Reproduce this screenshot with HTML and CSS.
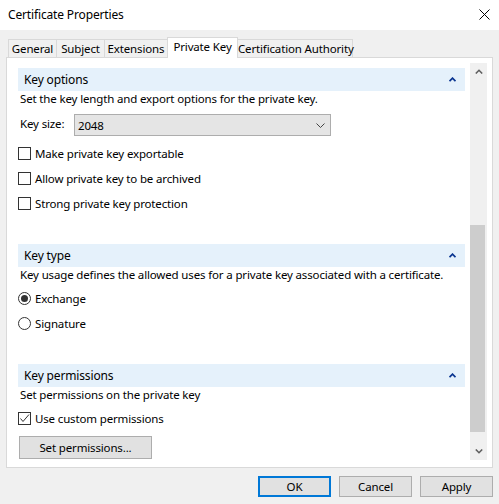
FILE: index.html
```html
<!DOCTYPE html>
<html>
<head>
<meta charset="utf-8">
<link rel="stylesheet" href="styles.css">
</head>
<body>
<div class="window">
  <div class="titlebar">
    <span class="title">Certificate Properties</span>
    <svg class="close" width="11" height="11" viewBox="0 0 11 11"><path d="M0.5 0.5 L10.5 10.5 M10.5 0.5 L0.5 10.5" stroke="#000" stroke-width="1" fill="none"/></svg>
  </div>
  <div class="tabs">
    <div class="tab t-general">General</div>
    <div class="tab t-subject">Subject</div>
    <div class="tab t-ext">Extensions</div>
    <div class="tab t-pk selected">Private Key</div>
    <div class="tab t-ca">Certification Authority</div>
  </div>
  <div class="panel">
    <div class="content">
      <div class="section-head"><span>Key options</span>
        <svg class="chev" width="7" height="5" viewBox="0 0 7 5"><path d="M0.5 4.2 L3.5 1.2 L6.5 4.2" stroke="#0a3591" stroke-width="1.8" fill="none"/></svg>
      </div>
      <div class="desc">Set the key length and export options for the private key.</div>
      <div class="keysize">
        <span class="ks-label">Key size:</span>
        <div class="select"><span>2048</span>
          <svg width="9" height="5" viewBox="0 0 9 5"><path d="M0.5 0.5 L4.5 4.5 L8.5 0.5" stroke="#444" stroke-width="1" fill="none"/></svg>
        </div>
      </div>
      <div class="check first"><span class="box"></span><span>Make private key exportable</span></div>
      <div class="check"><span class="box"></span><span>Allow private key to be archived</span></div>
      <div class="check"><span class="box"></span><span>Strong private key protection</span></div>

      <div class="section-head gap"><span>Key type</span>
        <svg class="chev" width="7" height="5" viewBox="0 0 7 5"><path d="M0.5 4.2 L3.5 1.2 L6.5 4.2" stroke="#0a3591" stroke-width="1.8" fill="none"/></svg>
      </div>
      <div class="desc">Key usage defines the allowed uses for a private key associated with a certificate.</div>
      <div class="check first-r"><span class="radio on"></span><span>Exchange</span></div>
      <div class="check"><span class="radio"></span><span>Signature</span></div>

      <div class="section-head gap"><span>Key permissions</span>
        <svg class="chev" width="7" height="5" viewBox="0 0 7 5"><path d="M0.5 4.2 L3.5 1.2 L6.5 4.2" stroke="#0a3591" stroke-width="1.8" fill="none"/></svg>
      </div>
      <div class="desc">Set permissions on the private key</div>
      <div class="check first-r"><span class="box checked"><svg width="11" height="11" viewBox="0 0 11 11"><path d="M1.5 5.5 L4 8.5 L10 1.5" stroke="#333" stroke-width="1" fill="none"/></svg></span><span>Use custom permissions</span></div>
      <div class="btn perm">Set permissions...</div>
    </div>
    <div class="scrollbar">
      <div class="sb-arrow"><svg width="8" height="5" viewBox="0 0 8 5"><path d="M0.8 4.5 L4 1.3 L7.2 4.5" stroke="#606060" stroke-width="1.6" fill="none"/></svg></div>
      <div class="sb-track"><div class="sb-thumb"></div></div>
      <div class="sb-arrow"><svg width="8" height="5" viewBox="0 0 8 5"><path d="M0.8 0.5 L4 3.7 L7.2 0.5" stroke="#606060" stroke-width="1.6" fill="none"/></svg></div>
    </div>
  </div>
  <div class="buttons">
    <div class="btn dlg default">OK</div>
    <div class="btn dlg">Cancel</div>
    <div class="btn dlg">Apply</div>
  </div>
</div>
</body>
</html>
```

FILE: styles.css
```css
html, body {
  margin: 0;
  padding: 0;
  background: #f0f0f0;
}
body {
  font-family: "Noto Sans", "Open Sans", sans-serif;
  font-size: 11.5px;
  letter-spacing: -0.15px;
  color: #000;
}
.window {
  width: 499px;
  height: 504px;
  background: #f0f0f0;
  overflow: hidden;
}
.titlebar {
  height: 30px;
  background: #fff;
  display: flex;
  align-items: center;
  justify-content: space-between;
  padding: 0 9px 0 8px;
}
.title {
  font-size: 12px;
  line-height: 16px;
}
.close {
  display: block;
  margin-top: -2px;
}
.tabs {
  display: flex;
  align-items: flex-end;
  height: 20px;
  margin-top: 7px;
  padding-left: 8px;
}
.tab {
  box-sizing: border-box;
  height: 18px;
  border: 1px solid #d9d9d9;
  border-bottom: none;
  background: #f0f0f0;
  text-align: center;
  line-height: 17px;
  margin-left: -1px;
  white-space: nowrap;
}
.t-general { width: 49px; margin-left: 0; }
.t-subject { width: 49px; }
.t-ext { width: 64px; }
.t-pk { width: 71px; }
.t-ca { width: 116px; }
.tab.selected {
  height: 21px;
  margin-bottom: -1px;
  background: #fff;
  position: relative;
  z-index: 1;
  line-height: 17px;
}
.panel {
  box-sizing: border-box;
  margin-left: 6px;
  width: 487px;
  height: 411px;
  background: #fff;
  border: 1px solid #d9d9d9;
  display: flex;
  padding: 5px 5px 7px 11px;
}
.content {
  width: 447px;
  height: 397px;
  overflow: hidden;
  padding-top: 5px;
  box-sizing: border-box;
  display: flex;
  flex-direction: column;
}
.section-head {
  flex: none;
  height: 23px;
  background: #e5f1fb;
  display: flex;
  align-items: center;
  justify-content: space-between;
  padding: 0 9px 0 6px;
  line-height: 16px;
  font-size: 12px;
}
.section-head.gap { margin-top: 33px; }
.chev { display: block; }
.desc {
  flex: none;
  line-height: 15px;
  padding-left: 2px;
  white-space: nowrap;
}
.keysize {
  flex: none;
  display: flex;
  align-items: center;
  margin-top: 8px;
  padding-left: 2px;
}
.ks-label {
  width: 54px;
  margin-top: -4px;
}
.select {
  box-sizing: border-box;
  width: 257px;
  height: 22px;
  background: #e5e5e5;
  border: 1px solid #adadad;
  display: flex;
  align-items: center;
  justify-content: space-between;
  padding: 0 5px 0 3px;
}
.select svg { display: block; margin-top: 1px; }
.check {
  flex: none;
  display: flex;
  align-items: center;
  height: 15px;
  line-height: 15px;
  margin-top: 10px;
}
.check.first { margin-top: 10px; }
.check.first-r { margin-top: 9px; }
.box {
  box-sizing: border-box;
  width: 13px;
  height: 13px;
  border: 1px solid #333;
  background: #fff;
  margin-right: 4px;
  flex: none;
}
.box svg { display: block; }
.radio {
  box-sizing: border-box;
  width: 13px;
  height: 13px;
  border: 1px solid #333;
  border-radius: 50%;
  background: #fff;
  margin-right: 4px;
  flex: none;
  display: flex;
  align-items: center;
  justify-content: center;
}
.radio.on::after {
  content: "";
  width: 7px;
  height: 7px;
  border-radius: 50%;
  background: #333;
}
.btn {
  box-sizing: border-box;
  background: #e1e1e1;
  border: 1px solid #adadad;
  display: flex;
  align-items: center;
  justify-content: center;
}
.perm {
  flex: none;
  width: 133px;
  height: 23px;
  margin-top: 10px;
  margin-left: 1px;
}
.scrollbar {
  width: 17px;
  height: 397px;
  margin-left: 5px;
  background: #f0f0f0;
  display: flex;
  flex-direction: column;
}
.sb-arrow {
  height: 17px;
  display: flex;
  align-items: center;
  justify-content: center;
  flex: none;
}
.sb-track {
  flex: 1;
  padding-top: 145px;
}
.sb-thumb {
  width: 15px;
  height: 207px;
  background: #cdcdcd;
}
.buttons {
  display: flex;
  justify-content: flex-end;
  gap: 8px;
  margin-top: 8px;
  padding-right: 6px;
}
.dlg {
  width: 73px;
  height: 21px;
}
.dlg.default {
  border: 2px solid #0078d7;
}
```
